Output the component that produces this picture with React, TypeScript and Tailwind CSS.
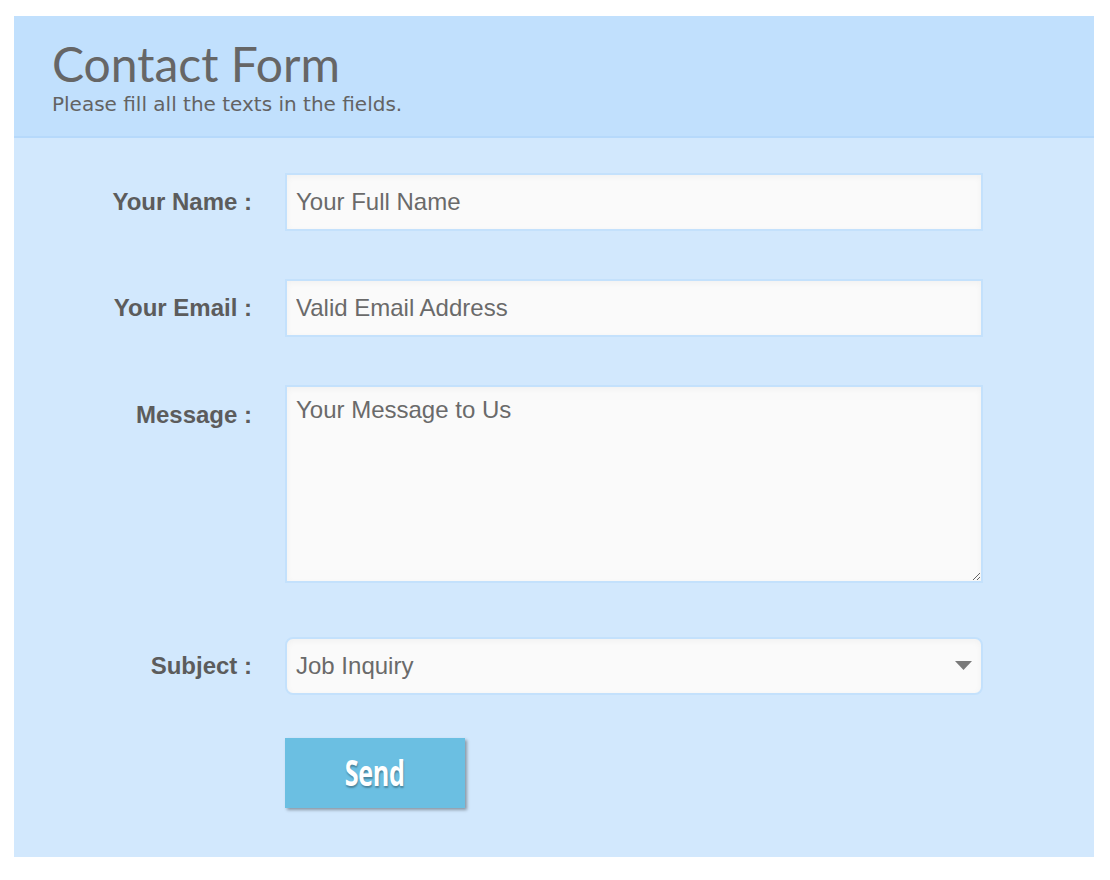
import { useState } from "react"

export default function App() {
  const [subject, setSubject] = useState("Job Inquiry")

  return (
    <div className="min-h-[880px] bg-white pt-4 pl-[14px]">
      <div className="w-[1080px] bg-[#d2e8fd]">
        {/* Header */}
        <div className="h-[122px] bg-[#c1e0fd] border-b-2 border-[#b6d9fb] pl-[38px] pt-[22px]">
          <h1 className="font-['Lato',sans-serif] text-[48px] leading-[52px] text-[#666666]">Contact Form</h1>
          <p className="mt-[2px] font-['DejaVu_Sans',sans-serif] text-[20px] leading-[24px] text-[#636363]">
            Please fill all the texts in the fields.
          </p>
        </div>

        {/* Form body */}
        <form className="pt-[35px] pb-[49px] font-['Liberation_Sans',Arial,sans-serif]" onSubmit={(e) => e.preventDefault()}>
          <div className="flex items-center">
            <label className="w-[238px] text-right text-[24px] font-bold text-[#5c5c5c]">Your Name :</label>
            <input
              type="text"
              placeholder="Your Full Name"
              className="ml-[33px] h-[58px] w-[698px] border-2 border-[#c4e1fc] bg-[#fafafa] px-[9px] text-[24px] text-[#666] placeholder-[#6a6a6a] shadow-[inset_0_2px_6px_rgba(0,0,0,0.04)] outline-none"
            />
          </div>

          <div className="mt-[48px] flex items-center">
            <label className="w-[238px] text-right text-[24px] font-bold text-[#5c5c5c]">Your Email :</label>
            <input
              type="email"
              placeholder="Valid Email Address"
              className="ml-[33px] h-[58px] w-[698px] border-2 border-[#c4e1fc] bg-[#fafafa] px-[9px] text-[24px] text-[#666] placeholder-[#6a6a6a] shadow-[inset_0_2px_6px_rgba(0,0,0,0.04)] outline-none"
            />
          </div>

          <div className="mt-[48px] flex items-start">
            <label className="w-[238px] pt-[12px] text-right text-[24px] font-bold text-[#5c5c5c]">Message :</label>
            <textarea
              placeholder="Your Message to Us"
              className="ml-[33px] h-[198px] w-[698px] border-2 border-[#c4e1fc] bg-[#fafafa] px-[9px] py-[9px] text-[24px] leading-[28px] text-[#666] placeholder-[#6a6a6a] shadow-[inset_0_2px_6px_rgba(0,0,0,0.04)] outline-none"
            />
          </div>

          <div className="mt-[54px] flex items-center">
            <label className="w-[238px] text-right text-[24px] font-bold text-[#5c5c5c]">Subject :</label>
            <div className="relative ml-[33px] w-[698px]">
              <select
                value={subject}
                onChange={(e) => setSubject(e.target.value)}
                className="h-[58px] w-full appearance-none rounded-[8px] border-2 border-[#c4e1fc] bg-[#fafafa] px-[9px] text-[24px] text-[#6a6a6a] shadow-[inset_0_2px_6px_rgba(0,0,0,0.04)] outline-none"
              >
                <option>Job Inquiry</option>
                <option>General Question</option>
                <option>Feedback</option>
              </select>
              <svg className="pointer-events-none absolute right-[11px] top-[24px]" width="17" height="9" viewBox="0 0 17 9">
                <path d="M0 0 H17 L8.5 9 Z" fill="#7a7a7a" />
              </svg>
            </div>
          </div>

          <div className="mt-[43px] pl-[271px]">
            <button
              type="submit"
              className="h-[70px] w-[180px] bg-[#6bbfe2] font-['Open_Sans',sans-serif] text-[35px] font-bold text-white shadow-[2px_2px_3px_rgba(0,0,0,0.35)] [text-shadow:1px_2px_2px_rgba(0,0,0,0.3)]"
            >
              <span className="inline-block scale-x-[0.72] tracking-[-0.5px]">Send</span>
            </button>
          </div>
        </form>
      </div>
    </div>
  )
}
